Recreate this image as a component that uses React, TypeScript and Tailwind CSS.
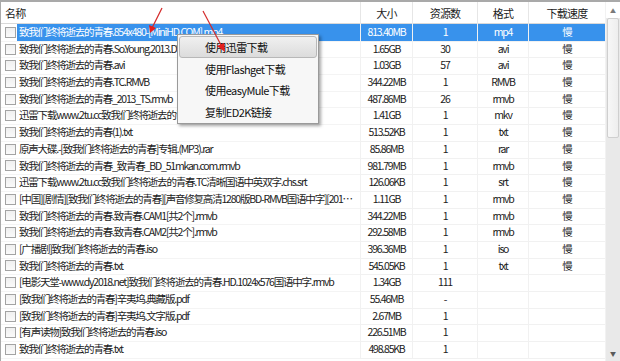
type Row = {
	name: string;
	size: string;
	sources: string;
	format: string;
	speed: string;
};

const ROWS: Row[] = [
	{ name: "致我们终将逝去的青春.854x480-[MiniHD.COM].mp4", size: "813.40MB", sources: "1", format: "mp4", speed: "慢" },
	{ name: "致我们终将逝去的青春.So.Young.2013.DVDRip.XviD.avi", size: "1.65GB", sources: "30", format: "avi", speed: "慢" },
	{ name: "致我们终将逝去的青春.avi", size: "1.03GB", sources: "57", format: "avi", speed: "慢" },
	{ name: "致我们终将逝去的青春.TC.RMVB", size: "344.22MB", sources: "1", format: "RMVB", speed: "慢" },
	{ name: "致我们终将逝去的青春_2013_TS.rmvb", size: "487.86MB", sources: "26", format: "rmvb", speed: "慢" },
	{ name: "迅雷下载www.2tu.cc致我们终将逝去的青春.TS.mkv", size: "1.41GB", sources: "1", format: "mkv", speed: "慢" },
	{ name: "致我们终将逝去的青春(1).txt", size: "513.52KB", sources: "1", format: "txt", speed: "慢" },
	{ name: "原声大碟.-[致我们终将逝去的青春]专辑.(MP3).rar", size: "85.86MB", sources: "1", format: "rar", speed: "慢" },
	{ name: "致我们终将逝去的青春_致青春_BD_51mkan.com.rmvb", size: "981.79MB", sources: "1", format: "rmvb", speed: "慢" },
	{ name: "迅雷下载www.2tu.cc致我们终将逝去的青春.TC清晰国语中英双字.chs.srt", size: "126.06KB", sources: "1", format: "srt", speed: "慢" },
	{ name: "[中国][剧情][致我们终将逝去的青春][声音修复高清1280版BD-RMVB国语中字][2013最新国产剧情大片]", size: "1.11GB", sources: "1", format: "rmvb", speed: "慢" },
	{ name: "致我们终将逝去的青春.致青春.CAM1[共2个].rmvb", size: "344.22MB", sources: "1", format: "rmvb", speed: "慢" },
	{ name: "致我们终将逝去的青春.致青春.CAM2[共2个].rmvb", size: "292.58MB", sources: "1", format: "rmvb", speed: "慢" },
	{ name: "[广播剧]致我们终将逝去的青春.iso", size: "396.36MB", sources: "1", format: "iso", speed: "慢" },
	{ name: "致我们终将逝去的青春.txt", size: "545.05KB", sources: "1", format: "txt", speed: "慢" },
	{ name: "[电影天堂-www.dy2018.net]致我们终将逝去的青春.HD.1024x576国语中字.rmvb", size: "1.34GB", sources: "111", format: "", speed: "" },
	{ name: "[致我们终将逝去的青春]辛夷坞.典藏版.pdf", size: "55.46MB", sources: "-", format: "", speed: "" },
	{ name: "[致我们终将逝去的青春]辛夷坞.文字版.pdf", size: "2.67MB", sources: "1", format: "", speed: "" },
	{ name: "[有声读物]致我们终将逝去的青春.iso", size: "226.51MB", sources: "1", format: "", speed: "" },
	{ name: "致我们终将逝去的青春.txt", size: "498.85KB", sources: "1", format: "", speed: "" },
];

const MENU = ["使用迅雷下载", "使用Flashget下载", "使用easyMule下载", "复制ED2K链接"];

const cols = "grid grid-cols-[359px_52px_65px_51px_77px]";

const FileRow = ({ row, selected }: { row: Row; selected: boolean }) => {
	const cell = selected
		? "bg-[#3892ec] text-white border-l border-[#6fb0f2]"
		: "border-l border-[#ececec]";
	return (
		<div className={`${cols} h-[16.7px] leading-[16.7px]`}>
			<div className="flex items-center border-b border-[#f4f4f4]">
				<span className="ml-[4px] w-[11px] h-[11px] border border-[#a3a3a3] bg-linear-to-b from-[#f0f0f0] to-[#fafafa] shrink-0"></span>
				<span
					className={`ml-[1px] h-full pl-[2px] pr-1 flex-1 min-w-0 truncate ${
						selected ? "bg-[#3892ec] text-white" : "text-[#1c1c1c]"
					}`}
				>
					{row.name}
				</span>
			</div>
			<div className={`text-center border-b border-[#f1f1f1] ${cell}`}>{row.size}</div>
			<div className={`text-center border-b border-[#f1f1f1] ${cell}`}>{row.sources}</div>
			<div className={`text-center border-b border-[#f1f1f1] ${cell}`}>{row.format}</div>
			<div className={`text-center border-b border-[#f1f1f1] ${cell}`}>{row.speed}</div>
		</div>
	);
};

const App = () => {
	return (
		<div className="relative w-[620px] h-[361px] overflow-hidden bg-white border-t-2 border-l border-[#a9a9a9] flex font-['Noto_Sans_CJK_SC',sans-serif] text-[10.5px] tracking-[-1.2px] text-[#1c1c1c]">
			{/* list */}
			<div className="w-[604px] flex flex-col">
				<div className={`${cols} h-[22px] border-b border-[#d9d9d9] items-center text-[11px] tracking-[-0.8px]`}>
					<div className="pl-[4px]">名称</div>
					<div className="text-center border-l border-[#e6e6e6] h-full leading-[22px]">大小</div>
					<div className="text-center border-l border-[#e6e6e6] h-full leading-[22px]">资源数</div>
					<div className="text-center border-l border-[#e6e6e6] h-full leading-[22px]">格式</div>
					<div className="text-center border-l border-[#e6e6e6] h-full leading-[22px]">下载速度</div>
				</div>
				{ROWS.map((row, i) => (
					<FileRow key={i} row={row} selected={i === 0} />
				))}
			</div>

			{/* scrollbar */}
			<div className="w-[15px] flex flex-col bg-[#e9e9e9] border-l border-[#f2f2f2]">
				<div className="h-[16px] bg-white flex items-center justify-center text-[6px] text-[#7a7a7a] tracking-normal">▲</div>
				<div className="h-[120px] mx-[1px] bg-linear-to-r from-[#f7f7f7] to-[#eeeeee] border border-[#cfcfcf] rounded-[2px]"></div>
				<div className="flex-1"></div>
				<div className="h-[16px] flex items-center justify-center text-[6px] text-[#5a5a5a] tracking-normal">▼</div>
			</div>

			{/* context menu */}
			<div className="absolute left-[176px] top-[32px] w-[142px] py-[1px] px-[1px] bg-[#f7f7f7] border border-[#9a9a9a] shadow-[2px_2px_3px_rgba(0,0,0,0.35)] text-[11px] tracking-[-0.6px] text-[#111]">
				{MENU.map((label, i) => (
					<div
						key={label}
						className={`h-[21.5px] leading-[20px] pl-[25px] rounded-[3px] border ${
							i === 0 ? "border-[#b8b8b8] bg-linear-to-b from-[#f0f0f0] to-[#dcdcdc]" : "border-transparent"
						}`}
					>
						{label}
					</div>
				))}
			</div>

			{/* annotation arrows */}
			<svg className="absolute left-0 top-0 pointer-events-none" width="620" height="361">
				<line x1="161" y1="6" x2="151" y2="26" stroke="#d42a2a" strokeWidth="1.2" />
				<polygon points="149,31 148,23 155,26" fill="#e41e1e" />
				<line x1="202" y1="9" x2="220" y2="43" stroke="#d42a2a" strokeWidth="1.2" />
				<polygon points="224,50 216,44 223,41" fill="#e41e1e" />
			</svg>
		</div>
	);
};

export default App;
